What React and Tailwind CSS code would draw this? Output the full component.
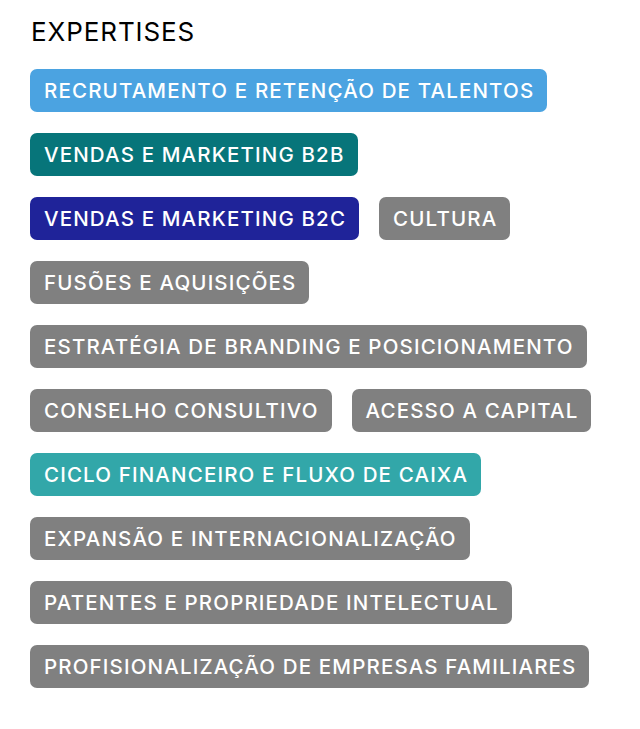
import React from "react";

const rows = [
  [["RECRUTAMENTO E RETENÇÃO DE TALENTOS", "bg-[#4ba3e1]"]],
  [["VENDAS E MARKETING B2B", "bg-[#07757a]"]],
  [["VENDAS E MARKETING B2C", "bg-[#1f2399]"], ["CULTURA", "bg-[#808080]"]],
  [["FUSÕES E AQUISIÇÕES", "bg-[#808080]"]],
  [["ESTRATÉGIA DE BRANDING E POSICIONAMENTO", "bg-[#808080]"]],
  [["CONSELHO CONSULTIVO", "bg-[#808080]"], ["ACESSO A CAPITAL", "bg-[#808080]"]],
  [["CICLO FINANCEIRO E FLUXO DE CAIXA", "bg-[#32a7a9]"]],
  [["EXPANSÃO E INTERNACIONALIZAÇÃO", "bg-[#808080]"]],
  [["PATENTES E PROPRIEDADE INTELECTUAL", "bg-[#808080]"]],
  [["PROFISIONALIZAÇÃO DE EMPRESAS FAMILIARES", "bg-[#808080]"]],
];

export default function App() {
  return (
    <div className="min-h-[729px] bg-white px-[30px] pt-[16px] font-['Inter',sans-serif]">
      <h2 className="text-[26px] leading-[32px] font-normal text-black tracking-[0.035em] pl-[1px]">EXPERTISES</h2>
      <div className="mt-[21px] flex flex-col gap-[21px]">
        {rows.map((row, i) => (
          <div key={i} className="flex flex-wrap gap-[20px]">
            {row.map(([t, c]) => (
              <span key={t} className={`${c} h-[43px] flex items-center rounded-[7px] pl-[14px] pr-[13px] pt-[1px] text-white text-[20.5px] font-medium tracking-[1.15px] whitespace-nowrap`}>
                {t}
              </span>
            ))}
          </div>
        ))}
      </div>
    </div>
  );
}
